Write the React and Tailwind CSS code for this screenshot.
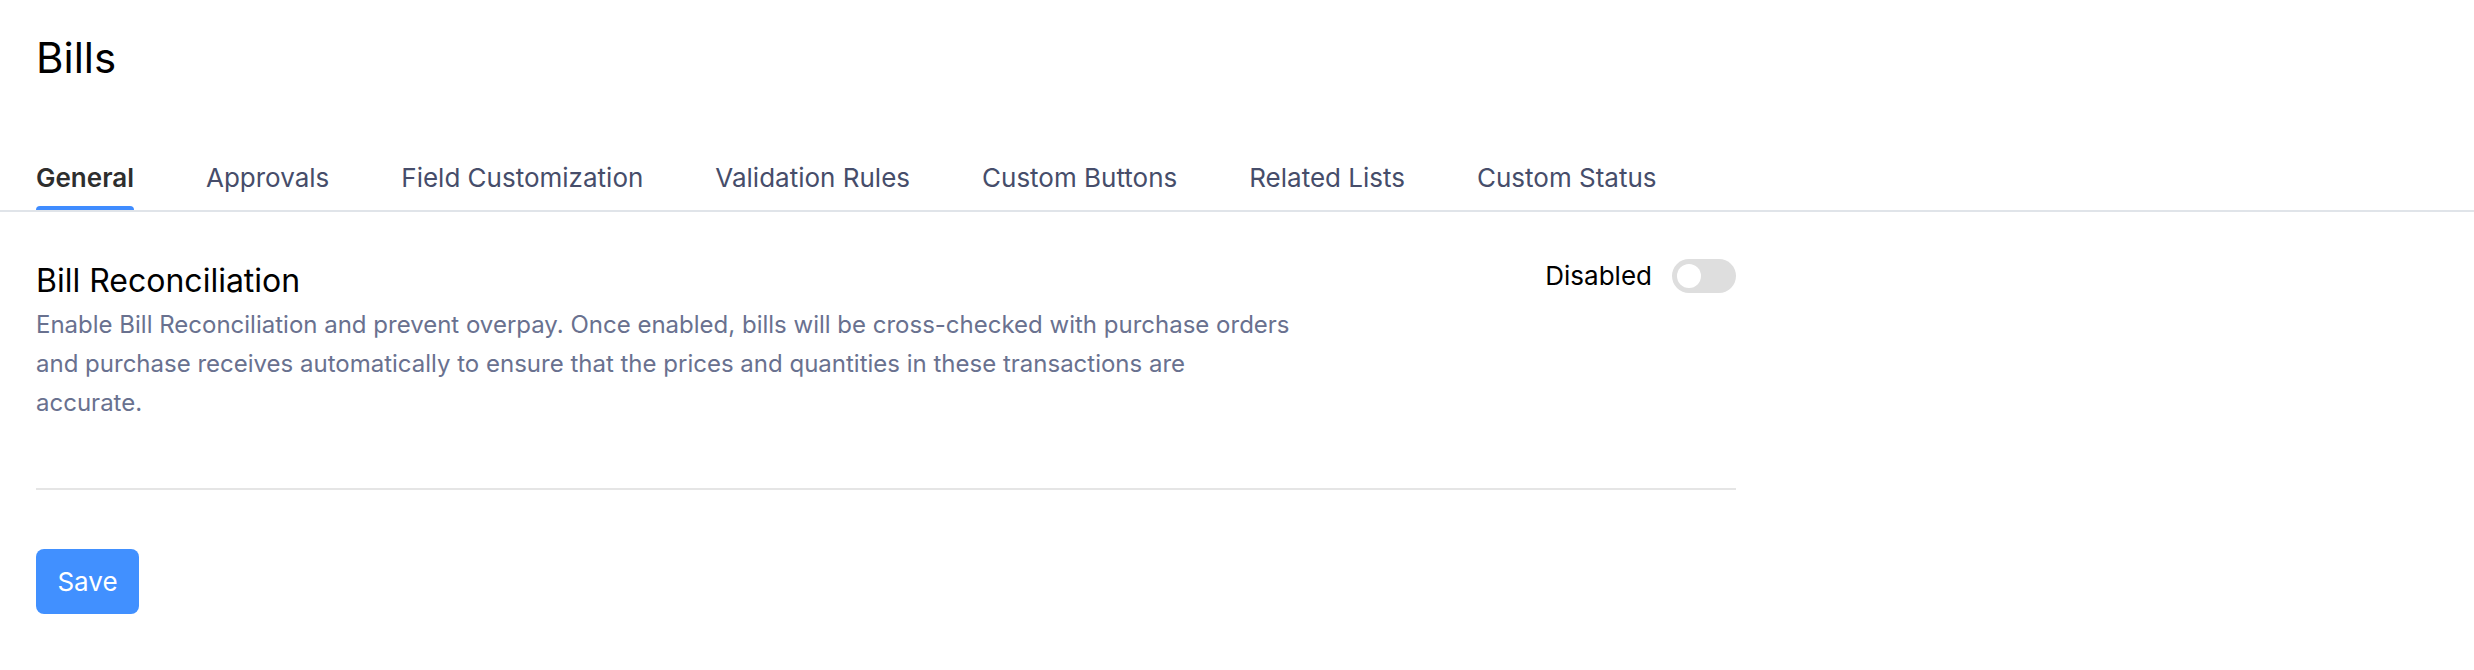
import React from "react";

const tabs = [
  "General",
  "Approvals",
  "Field Customization",
  "Validation Rules",
  "Custom Buttons",
  "Related Lists",
  "Custom Status",
];

export default function App() {
  return (
    <div
      className="min-h-[670px] w-full bg-white text-black"
      style={{ fontFamily: "Inter, 'Noto Sans', sans-serif" }}
    >
      <div className="pl-[36px] pt-[33px]">
        <h1 className="text-[42px] leading-[50px] font-normal text-black">Bills</h1>
      </div>

      <div className="mt-[80px] border-b-2 border-[#e0e4e9] pl-[36px]">
        <div className="flex gap-[72px]">
          {tabs.map((t, i) => (
            <div key={t} className="relative pb-[17px]">
              <span
                className={
                  i === 0
                    ? "text-[26px] leading-[30px] font-semibold text-[#2e2e2e]"
                    : "text-[26px] leading-[30px] font-normal text-[#464d6a]"
                }
              >
                {t}
              </span>
              {i === 0 && (
                <div className="absolute bottom-0 left-0 right-0 h-[4px] rounded-t-[4px] bg-[#3f8cff]" />
              )}
            </div>
          ))}
        </div>
      </div>

      <div className="ml-[36px] w-[1700px] pt-[50px]">
        <div className="flex justify-between pb-[66px] border-b-2 border-[#e5e5e5]">
          <div>
            <div className="text-[32px] leading-[38px] text-black">Bill Reconciliation</div>
            <p className="mt-[5px] w-[1320px] text-[24px] leading-[39px] text-[#69718f]">
              Enable Bill Reconciliation and prevent overpay. Once enabled, bills will be
              cross-checked with purchase orders
              <br />
              and purchase receives automatically to ensure that the prices and quantities in
              these transactions are
              <br />
              accurate.
            </p>
          </div>
          <div className="-mt-[3px] flex items-start gap-[20px]">
            <span className="text-[26px] leading-[34px] text-black">Disabled</span>
            <div className="flex h-[34px] w-[64px] items-center rounded-full bg-[#dedede] px-[5px]">
              <div className="h-[24px] w-[24px] rounded-full bg-white" />
            </div>
          </div>
        </div>

        <button className="mt-[59px] h-[65px] w-[103px] rounded-[8px] bg-[#4190ff] text-[26px] text-white">
          Save
        </button>
      </div>
    </div>
  );
}
